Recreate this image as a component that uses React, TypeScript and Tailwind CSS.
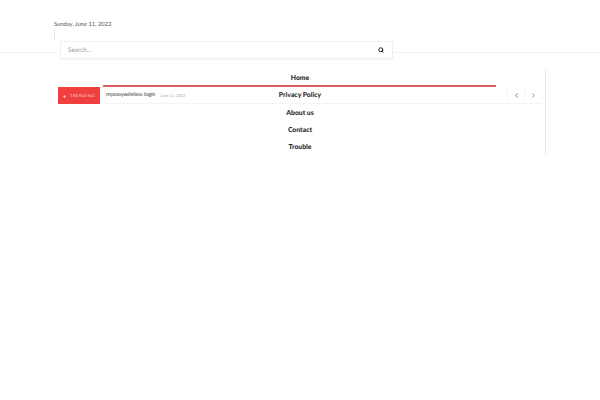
import { ChevronLeft, ChevronRight, Search, Zap } from 'lucide-react'

const menu = ['Home', 'Privacy Policy', 'About us', 'Contact', 'Trouble']

export default function App() {
  return (
    <div className="relative h-[400px] w-[600px] overflow-hidden bg-white font-['Lato',sans-serif] [text-rendering:geometricPrecision]">
      {/* Top bar */}
      <div className="h-[53px] border-b border-[#f4f4f4] pl-[54px] pt-[18px]">
        <p className="pt-[2px] text-[5.8px] leading-[9px] text-[#555]">Sunday, June 11, 2023</p>
        <div className="mt-[1px] h-[10px] w-px bg-[#e6e6e6]" />
      </div>

      {/* Search dropdown */}
      <div className="absolute left-[60px] top-[41px] flex h-[18px] w-[333px] items-center justify-between border border-[#f0f0f0] bg-white pl-[7px] pr-[8px] shadow-[0_1px_1px_rgba(0,0,0,0.03)]">
        <span className="pt-[1px] text-[6.4px] text-[#999]">Search...</span>
        <Search className="h-[6px] w-[6px] text-[#222]" strokeWidth={4} />
      </div>

      {/* Content */}
      <div className="ml-[58px] mr-[54px] mt-[17px] h-[85px] border-r border-[#e8e8e8] pt-[17px]">
        <div className="flex h-[17px] items-stretch">
          <div className="flex w-[42px] items-center gap-[4px] bg-[#ef3f3f] pl-[5px] pt-[1px] text-[4px] tracking-[0.6px] text-[#ffd9d9]">
            <Zap className="h-[5px] w-[3px] fill-white text-white" />
            TRENDING
          </div>
          <div className="ml-[3px] flex w-[404px] items-center border-b border-[#f4f4f4] pl-[3px] pt-[1px]">
            <span className="text-[5.6px] tracking-[-0.1px] text-[#333]">myeasywireless login</span>
            <span className="ml-[5px] text-[4px] text-[#aaa]">June 11, 2023</span>
          </div>
          <div className="flex items-center border-b border-[#f4f4f4]">
            <button className="flex h-[16px] w-[17px] items-center justify-center border-l border-[#f4f4f4] text-[#666]">
              <ChevronLeft className="h-[7px] w-[7px]" strokeWidth={3} />
            </button>
            <button className="flex h-[16px] w-[17px] items-center justify-center border-l border-[#f4f4f4] text-[#888]">
              <ChevronRight className="h-[7px] w-[7px]" strokeWidth={3} />
            </button>
          </div>
        </div>
      </div>

      {/* Red rule above the ticker */}
      <div className="absolute left-[103px] top-[85px] h-[2px] w-[393px] bg-[#d96060]" />

      {/* Open menu, lies over the ticker */}
      <nav className="absolute left-0 top-[69.5px] w-[600px]">
        {menu.map((item) => (
          <div key={item} className="flex h-[17.3px] items-center justify-center text-[6.8px] font-black text-[#2a2a2a]">
            {item}
          </div>
        ))}
      </nav>
    </div>
  )
}
